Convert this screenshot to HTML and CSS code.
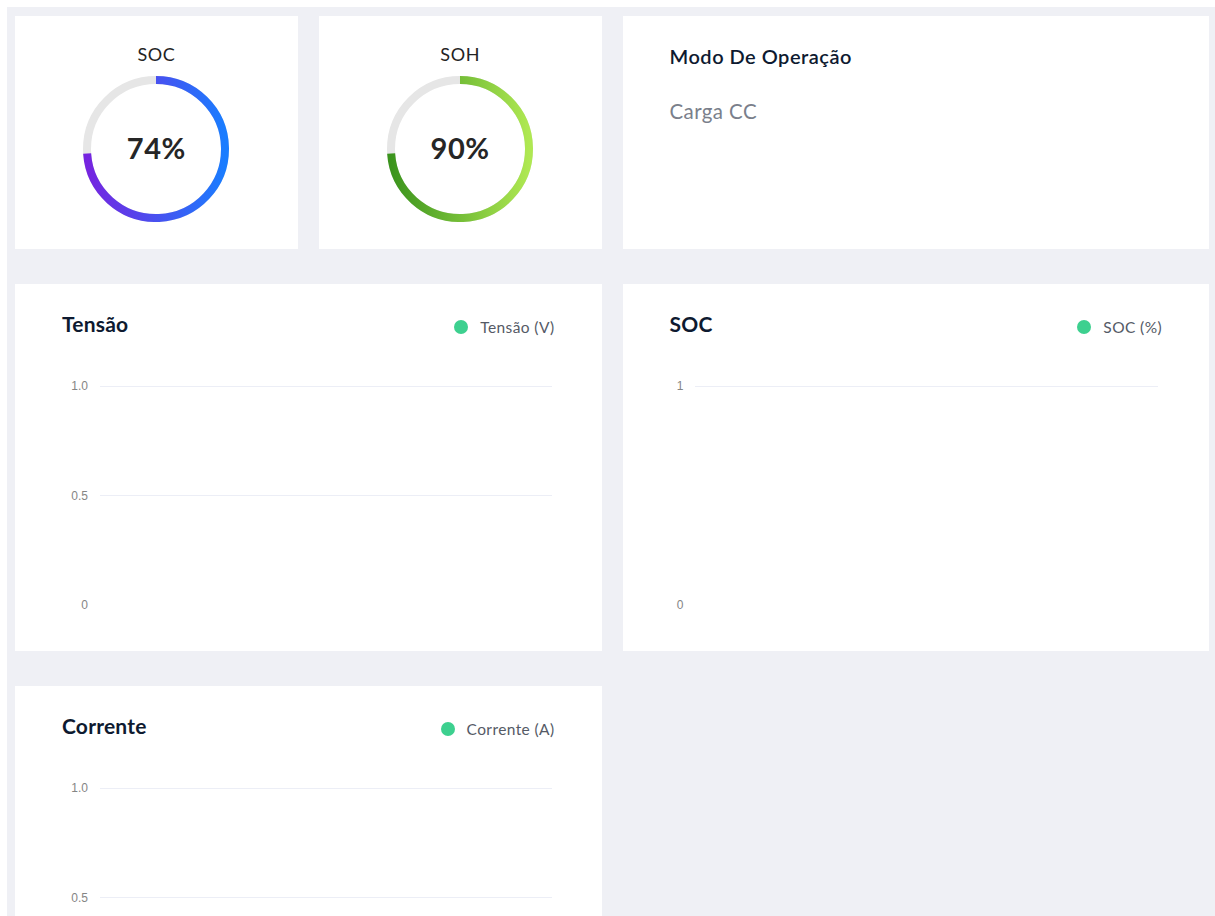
FILE: index.html
```html
<!DOCTYPE html>
<html lang="pt-BR">
<head>
<meta charset="utf-8">
<title>Painel da Bateria</title>
<link rel="stylesheet" href="styles.css">
</head>
<body>
<div class="shell">
  <main class="board">

    <section class="card gauge-card">
      <h3 class="gauge-title">SOC</h3>
      <div class="gauge">
        <svg class="gauge-ring" viewBox="0 0 146 146" width="146" height="146">
          <defs>
            <linearGradient id="grad-soc" x1="100%" y1="0%" x2="0%" y2="0%">
              <stop offset="0%" stop-color="#1a7dff"/>
              <stop offset="100%" stop-color="#7624e0"/>
            </linearGradient>
          </defs>
          <circle class="track" cx="73" cy="73" r="69"/>
          <path class="arc" stroke="url(#grad-soc)" d="M73 4 A69 69 0 1 1 4.14 77.6"/>
        </svg>
        <span class="gauge-value">74%</span>
      </div>
    </section>

    <section class="card gauge-card">
      <h3 class="gauge-title">SOH</h3>
      <div class="gauge">
        <svg class="gauge-ring" viewBox="0 0 146 146" width="146" height="146">
          <defs>
            <linearGradient id="grad-soh" x1="100%" y1="0%" x2="0%" y2="0%">
              <stop offset="0%" stop-color="#afe852"/>
              <stop offset="100%" stop-color="#3b941d"/>
            </linearGradient>
          </defs>
          <circle class="track" cx="73" cy="73" r="69"/>
          <path class="arc" stroke="url(#grad-soh)" d="M73 4 A69 69 0 1 1 4.14 77.6"/>
        </svg>
        <span class="gauge-value">90%</span>
      </div>
    </section>

    <section class="card mode-card span-2">
      <h3 class="card-title">Modo De Operação</h3>
      <p class="mode-value">Carga CC</p>
    </section>

    <section class="card chart-card span-2">
      <header class="chart-head">
        <h3 class="card-title">Tensão</h3>
        <span class="legend"><i class="legend-dot"></i>Tensão (V)</span>
      </header>
      <div class="plot">
        <div class="tick"><span class="tick-label">1.0</span><span class="grid-line"></span></div>
        <div class="tick"><span class="tick-label">0.5</span><span class="grid-line"></span></div>
        <div class="tick"><span class="tick-label">0</span><span class="grid-line base"></span></div>
      </div>
    </section>

    <section class="card chart-card span-2">
      <header class="chart-head">
        <h3 class="card-title">SOC</h3>
        <span class="legend"><i class="legend-dot"></i>SOC (%)</span>
      </header>
      <div class="plot plot-int">
        <div class="tick"><span class="tick-label">1</span><span class="grid-line"></span></div>
        <div class="tick"><span class="tick-label">0</span><span class="grid-line base"></span></div>
      </div>
    </section>

    <section class="card chart-card span-2">
      <header class="chart-head">
        <h3 class="card-title">Corrente</h3>
        <span class="legend"><i class="legend-dot"></i>Corrente (A)</span>
      </header>
      <div class="plot">
        <div class="tick"><span class="tick-label">1.0</span><span class="grid-line"></span></div>
        <div class="tick"><span class="tick-label">0.5</span><span class="grid-line"></span></div>
        <div class="tick"><span class="tick-label">0</span><span class="grid-line base"></span></div>
      </div>
    </section>

  </main>
</div>
</body>
</html>
```

FILE: styles.css
```css
* {
  box-sizing: border-box;
}

html,
body {
  margin: 0;
  padding: 0;
  background: #ffffff;
}

body {
  font-family: "Lato", "Noto Sans", "Liberation Sans", sans-serif;
  color: #1f2430;
}

h3,
p {
  margin: 0;
}

/* white frame around the dashboard */
.shell {
  padding: 7px 0 0 7px;
}

.board {
  background: #eff0f5;
  padding: 9px 6px 0 8px;
  display: grid;
  grid-template-columns: repeat(4, 1fr);
  column-gap: 21px;
  row-gap: 35px;
}

.card {
  background: #ffffff;
}

.span-2 {
  grid-column: span 2;
}

/* ---------- circular gauges ---------- */
.gauge-card {
  display: flex;
  flex-direction: column;
  align-items: center;
  padding: 26px 0 27px;
}

.gauge-title {
  font-size: 18px;
  line-height: 24px;
  font-weight: 400;
  letter-spacing: 0.6px;
  color: #232323;
  margin-bottom: 10px;
}

.gauge {
  position: relative;
  width: 146px;
  height: 146px;
}

.gauge-ring {
  display: block;
}

.gauge-ring .track {
  fill: none;
  stroke: #e6e6e6;
  stroke-width: 8;
}

.gauge-ring .arc {
  fill: none;
  stroke-width: 8;
  stroke-linecap: butt;
}

.gauge-value {
  position: absolute;
  inset: 0 0 4px 0;
  display: flex;
  align-items: center;
  justify-content: center;
  font-size: 29px;
  font-weight: 700;
  color: #262626;
  letter-spacing: 0.6px;
}

/* ---------- operation mode ---------- */
.card-title {
  font-size: 21px;
  line-height: 24px;
  font-weight: 700;
  color: #0e1a30;
  letter-spacing: 0.2px;
}

.mode-card {
  padding: 28px 47px;
}

.mode-card .card-title {
  font-size: 20px;
  font-weight: 600;
  letter-spacing: 0.5px;
}

.mode-value {
  margin-top: 31px;
  font-size: 20.5px;
  line-height: 24px;
  letter-spacing: 0.4px;
  color: #7a7f8b;
}

/* ---------- line charts ---------- */
.chart-card {
  padding: 28px 47px 39px;
}

.chart-head {
  display: flex;
  justify-content: space-between;
  align-items: flex-start;
  height: 24px;
}

.legend {
  display: flex;
  align-items: center;
  gap: 12px;
  margin-top: 3px;
  font-size: 15.5px;
  line-height: 24px;
  letter-spacing: 0.4px;
  color: #555a66;
}

.legend-dot {
  width: 14px;
  height: 14px;
  border-radius: 50%;
  background: #3dd08f;
}

.plot {
  margin-top: 43px;
  height: 233px;
  display: flex;
  flex-direction: column;
  justify-content: space-between;
}

.tick {
  display: flex;
  align-items: center;
  height: 14px;
  gap: 12px;
}

.tick-label {
  width: 26px;
  text-align: right;
  font-family: "Liberation Sans", Arial, sans-serif;
  font-size: 12px;
  line-height: 14px;
  color: #858585;
}

.grid-line {
  flex: 1;
  height: 1px;
  margin-right: 3px;
  background: #eceef6;
}

.grid-line.base {
  background: transparent;
}

.plot-int .tick {
  gap: 11px;
}

.plot-int .tick-label {
  width: 14px;
}

.plot-int .grid-line {
  margin-right: 4px;
}
```
